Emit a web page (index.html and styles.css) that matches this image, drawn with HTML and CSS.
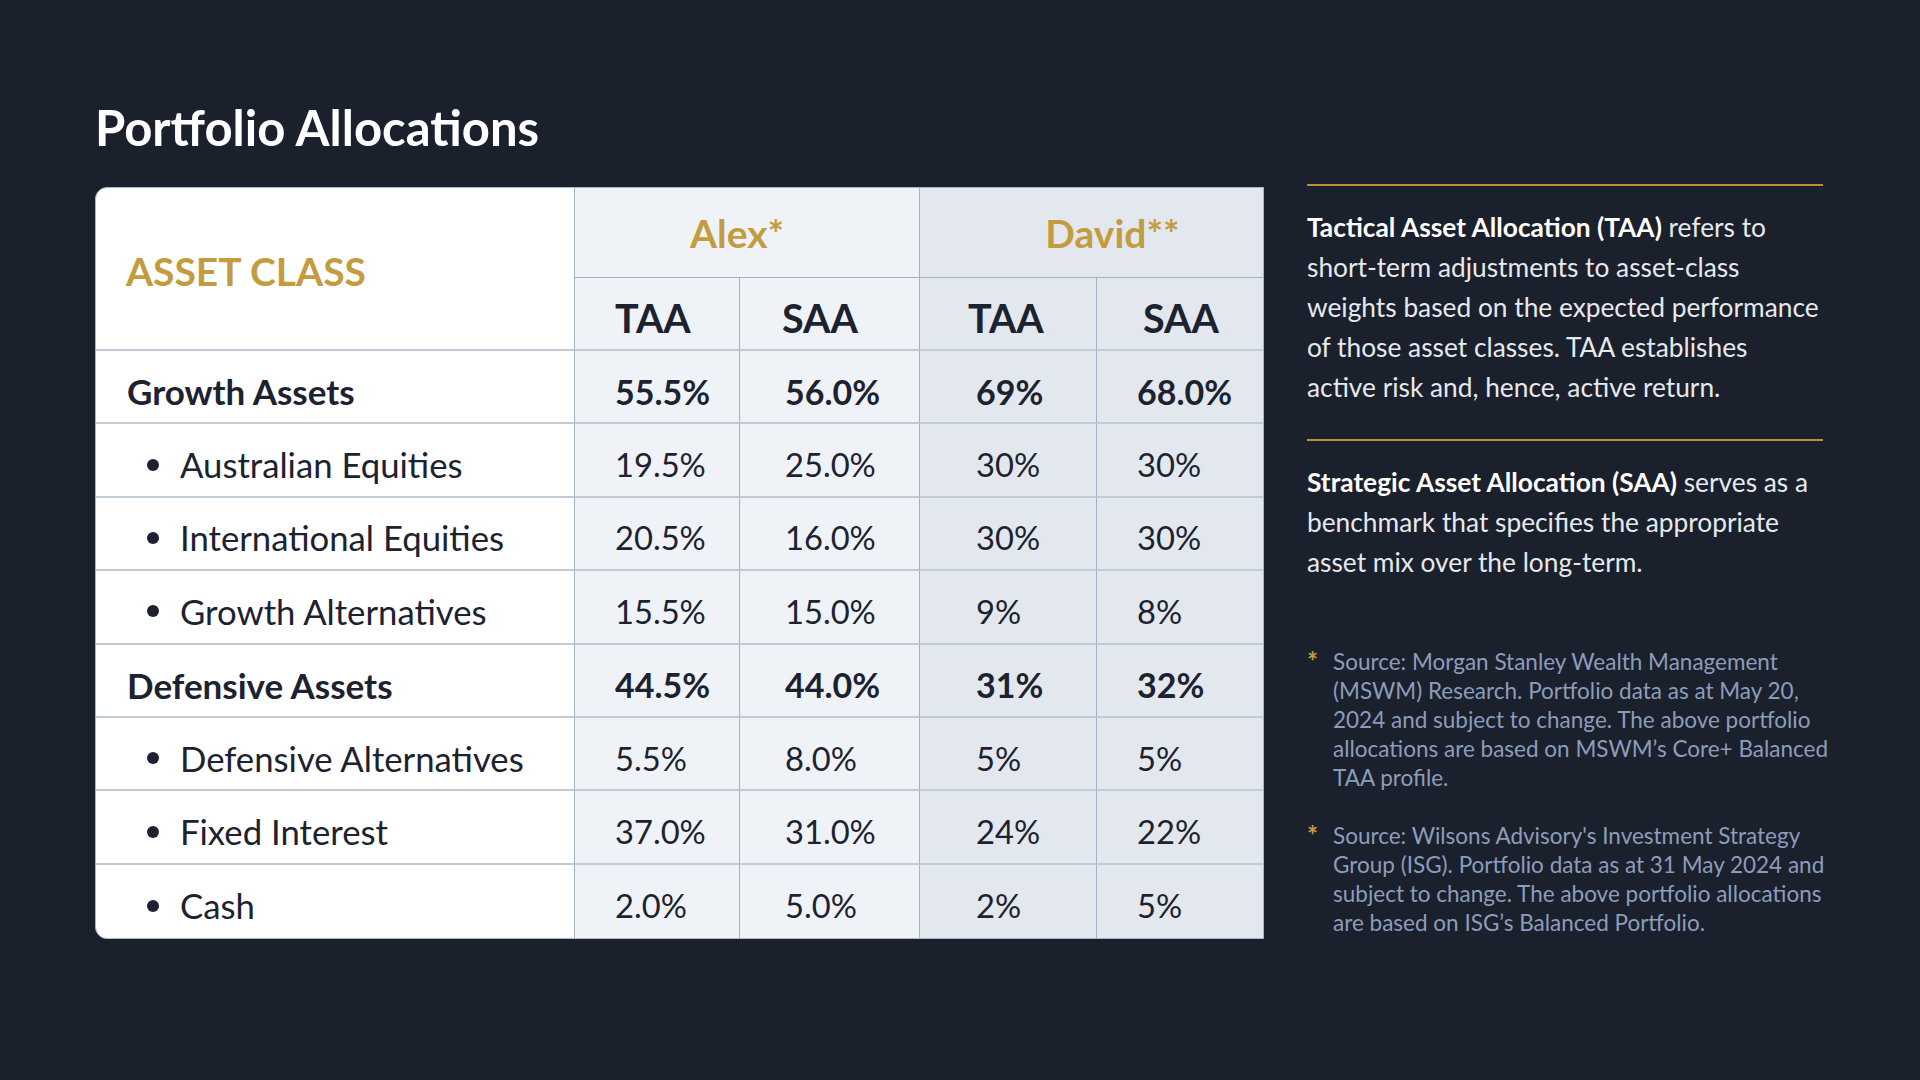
FILE: index.html
```html
<!DOCTYPE html>
<html lang="en">
<head>
<meta charset="utf-8">
<title>Portfolio Allocations</title>
<link rel="stylesheet" href="styles.css">
</head>
<body>
<div class="page">
  <h1 class="title">Portfolio Allocations</h1>
  <div class="content">
    <div class="alloc">
      <div class="cell head-asset">ASSET CLASS</div>
      <div class="cell head-group alex">Alex*</div>
      <div class="cell head-group david last">David**</div>

      <div class="cell head-sub alex hs-a1">TAA</div>
      <div class="cell head-sub alex hs-a2">SAA</div>
      <div class="cell head-sub david hs-d1">TAA</div>
      <div class="cell head-sub david hs-d2 last">SAA</div>

      <div class="cell label group">Growth Assets</div>
      <div class="cell num bold alex n-a1">55.5%</div>
      <div class="cell num bold alex n-a2">56.0%</div>
      <div class="cell num bold david n-d1">69%</div>
      <div class="cell num bold david n-d2 last">68.0%</div>

      <div class="cell label sub"><span class="dot"></span>Australian Equities</div>
      <div class="cell num alex n-a1">19.5%</div>
      <div class="cell num alex n-a2">25.0%</div>
      <div class="cell num david n-d1">30%</div>
      <div class="cell num david n-d2 last">30%</div>

      <div class="cell label sub"><span class="dot"></span>International Equities</div>
      <div class="cell num alex n-a1">20.5%</div>
      <div class="cell num alex n-a2">16.0%</div>
      <div class="cell num david n-d1">30%</div>
      <div class="cell num david n-d2 last">30%</div>

      <div class="cell label sub"><span class="dot"></span>Growth Alternatives</div>
      <div class="cell num alex n-a1">15.5%</div>
      <div class="cell num alex n-a2">15.0%</div>
      <div class="cell num david n-d1">9%</div>
      <div class="cell num david n-d2 last">8%</div>

      <div class="cell label group">Defensive Assets</div>
      <div class="cell num bold alex n-a1">44.5%</div>
      <div class="cell num bold alex n-a2">44.0%</div>
      <div class="cell num bold david n-d1">31%</div>
      <div class="cell num bold david n-d2 last">32%</div>

      <div class="cell label sub"><span class="dot"></span>Defensive Alternatives</div>
      <div class="cell num alex n-a1">5.5%</div>
      <div class="cell num alex n-a2">8.0%</div>
      <div class="cell num david n-d1">5%</div>
      <div class="cell num david n-d2 last">5%</div>

      <div class="cell label sub"><span class="dot"></span>Fixed Interest</div>
      <div class="cell num alex n-a1">37.0%</div>
      <div class="cell num alex n-a2">31.0%</div>
      <div class="cell num david n-d1">24%</div>
      <div class="cell num david n-d2 last">22%</div>

      <div class="cell label sub bottom"><span class="dot"></span>Cash</div>
      <div class="cell num alex n-a1 bottom">2.0%</div>
      <div class="cell num alex n-a2 bottom">5.0%</div>
      <div class="cell num david n-d1 bottom">2%</div>
      <div class="cell num david n-d2 last bottom">5%</div>
    </div>

    <aside class="notes">
      <section class="def">
        <p class="def-text"><strong>Tactical Asset Allocation (TAA)</strong> refers to<br>short-term adjustments to asset-class<br>weights based on the expected performance<br>of those asset classes. TAA establishes<br>active risk and, hence, active return.</p>
      </section>
      <section class="def">
        <p class="def-text"><strong>Strategic Asset Allocation (SAA)</strong> serves as a<br>benchmark that specifies the appropriate<br>asset mix over the long-term.</p>
      </section>
      <div class="footnotes">
        <div class="fn"><span class="star">*</span><p class="fn-text">Source: Morgan Stanley Wealth Management<br>(MSWM) Research. Portfolio data as at May 20,<br>2024 and subject to change. The above portfolio<br>allocations are based on MSWM’s Core+ Balanced<br>TAA profile.</p></div>
        <div class="fn"><span class="star">*</span><p class="fn-text">Source: Wilsons Advisory's Investment Strategy<br>Group (ISG). Portfolio data as at 31 May 2024 and<br>subject to change. The above portfolio allocations<br>are based on ISG’s Balanced Portfolio.</p></div>
      </div>
    </aside>
  </div>
</div>
</body>
</html>
```

FILE: styles.css
```css
* { box-sizing: border-box; }
html, body { margin: 0; padding: 0; }
body {
  background: #1b202d;
  font-family: "Lato", "Noto Sans", sans-serif;
  color: #1c2230;
  width: 1920px;
  height: 1080px;
  overflow: hidden;
}
.page { padding: 98px 0 0 95px; }
.title {
  margin: 0 0 31px;
  font-size: 49px;
  line-height: 58px;
  font-weight: 700;
  color: #ffffff;
}
.content {
  display: flex;
  align-items: flex-start;
  gap: 43px;
}
.alloc {
  display: grid;
  grid-template-columns: 479px 165px 180px 177px 166px;
  grid-template-rows: 90px 73px repeat(8, 73.4px);
  border: 1px solid #aab7c7;
  border-radius: 12px 0 0 12px;
  overflow: hidden;
  background: #ffffff;
}
.cell {
  display: flex;
  align-items: center;
  border-right: 1px solid #a3b2c5;
  border-bottom: 2px solid #c0cbd8;
  white-space: nowrap;
}
.cell.last { border-right: none; }
.cell.bottom { border-bottom: none; }
.alex { background: #eff3f7; }
.david { background: #e3e8ee; }

.head-asset {
  grid-row: 1 / 3;
  padding: 5px 0 0 30px;
  font-size: 39px;
  font-weight: 700;
  color: #c49c40;
}
.head-group {
  grid-column: span 2;
  justify-content: center;
  font-size: 39px;
  font-weight: 700;
  color: #c49c40;
  border-bottom: 1px solid #a3b2c5;
}
.head-group.alex { padding-right: 20px; }
.head-group.david { padding-left: 42px; }
.head-sub {
  font-size: 39.5px;
  font-weight: 700;
  padding-top: 8px;
}
.hs-a1 { padding-left: 40px; }
.hs-a2 { padding-left: 42px; }
.hs-d1 { padding-left: 48px; }
.hs-d2 { padding-left: 46px; }

.label { padding-top: 9px; }
.label.group {
  padding-left: 31px;
  font-size: 35px;
  font-weight: 700;
}
.label.sub {
  padding-left: 51px;
  font-size: 34.7px;
  font-weight: 400;
}
.dot {
  width: 12px;
  height: 12px;
  border-radius: 50%;
  background: #1c2230;
  margin-right: 21px;
  flex: none;
}
.num {
  padding-top: 9px;
  font-size: 32.7px;
  font-weight: 400;
}
.num.bold { font-size: 34px; font-weight: 700; }
.n-a1 { padding-left: 40px; }
.n-a2 { padding-left: 45px; }
.n-d1 { padding-left: 56px; }
.n-d2 { padding-left: 40px; }

.notes {
  width: 516px;
  margin-top: -3px;
}
.def {
  border-top: 2px solid #b8913a;
  padding: 21px 0 32px;
}
.def-text {
  margin: 0;
  font-size: 26.3px;
  line-height: 40px;
  color: #e6e9ee;
  white-space: nowrap;
}
.def-text strong { color: #ffffff; font-weight: 700; }
.footnotes { padding-top: 33px; }
.fn { display: flex; margin-bottom: 29px; }
.star {
  width: 26px;
  flex: none;
  color: #c49c40;
  font-size: 26px;
  font-weight: 700;
  line-height: 29px;
}
.fn-text {
  margin: 0;
  font-size: 22.5px;
  line-height: 29px;
  color: #8c9dbb;
  white-space: nowrap;
}
```
